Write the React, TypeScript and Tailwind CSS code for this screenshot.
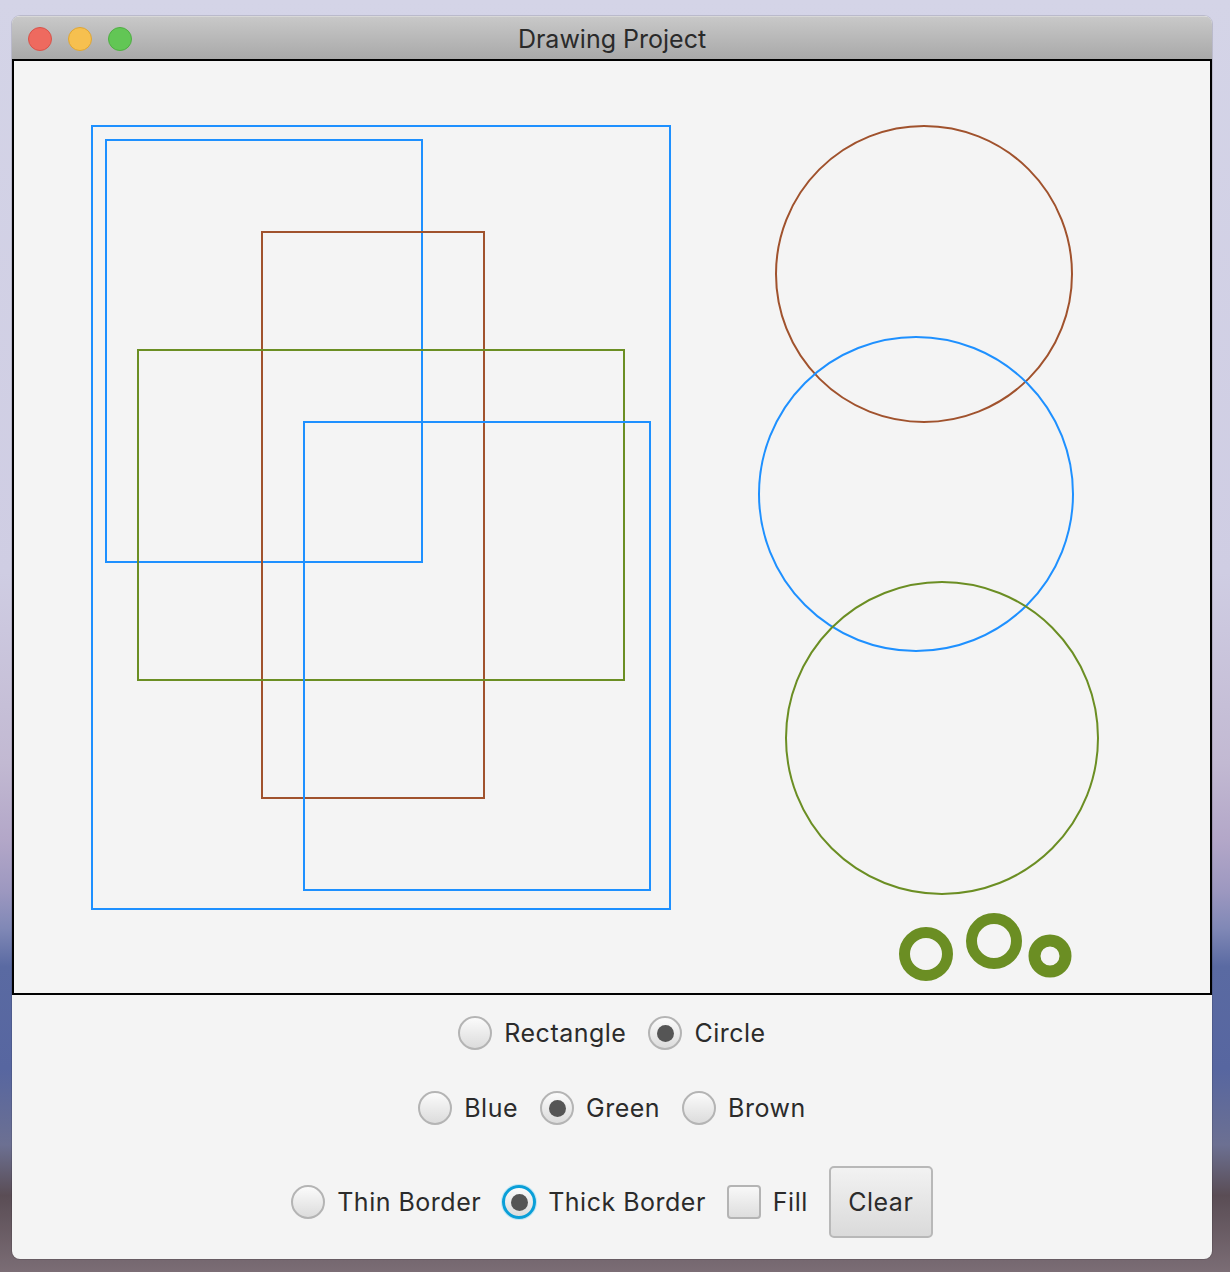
import React from "react";

const BLUE = "#1e90ff";
const GREEN = "#6b8e23";
const BROWN = "#a0522d";

interface Shape {
  kind: "rect" | "circle";
  color: string;
  width: number;
  x: number;
  y: number;
  w: number;
  h: number;
}

// coordinates are in page pixels, the canvas group is shifted back by its origin
const shapes: Shape[] = [
  { kind: "rect", color: BLUE, width: 2, x: 92, y: 126, w: 578, h: 783 },
  { kind: "rect", color: BLUE, width: 2, x: 106, y: 140, w: 316, h: 422 },
  { kind: "rect", color: BROWN, width: 2, x: 262, y: 232, w: 222, h: 566 },
  { kind: "rect", color: GREEN, width: 2, x: 138, y: 350, w: 486, h: 330 },
  { kind: "rect", color: BLUE, width: 2, x: 304, y: 422, w: 346, h: 468 },
  { kind: "circle", color: BROWN, width: 2, x: 924, y: 274, w: 148, h: 0 },
  { kind: "circle", color: BLUE, width: 2, x: 916, y: 494, w: 157, h: 0 },
  { kind: "circle", color: GREEN, width: 2, x: 942, y: 738, w: 156, h: 0 },
  { kind: "circle", color: GREEN, width: 11, x: 926, y: 954, w: 21.5, h: 0 },
  { kind: "circle", color: GREEN, width: 11, x: 994, y: 941, w: 22.5, h: 0 },
  { kind: "circle", color: GREEN, width: 12, x: 1050, y: 956, w: 15.5, h: 0 },
];

const Radio: React.FC<{ label: string; checked?: boolean; focused?: boolean }> = ({
  label,
  checked,
  focused,
}) => (
  <div className="flex items-center gap-3">
    <div
      className={
        focused
          ? "flex h-[34px] w-[34px] items-center justify-center rounded-full border-[3px] border-[#0a9fd8] bg-gradient-to-b from-[#fbfbfb] to-[#dcdcdc] shadow-[0_0_0_1px_#bfe6f5]"
          : "flex h-[34px] w-[34px] items-center justify-center rounded-full border-2 border-[#b4b4b4] bg-gradient-to-b from-[#fbfbfb] to-[#dcdcdc]"
      }
    >
      {checked && <div className="h-[17px] w-[17px] rounded-full bg-[#555555]" />}
    </div>
    <span>{label}</span>
  </div>
);

export default function App() {
  return (
    <div className="h-[1272px] w-[1230px] overflow-hidden bg-[linear-gradient(180deg,#d4d4e7_0%,#cfcde3_45%,#c2b9d2_60%,#b3a7c8_66%,#9d98c0_70%,#8088b6_73%,#5a6aa2_76%,#5766a0_84%,#6c7092_90%,#5a4d55_94%,#7b6d75_100%)] pt-[16px] pl-[12px] font-['Inter','Liberation_Sans',sans-serif] text-[25px] leading-[34px] tracking-[0.5px] text-[#2b2b2b]">
      <div className="flex h-[1243px] w-[1200px] flex-col overflow-hidden rounded-[8px] bg-[#f4f4f4] shadow-[0_0_0_1px_rgba(0,0,0,0.12)]">
        {/* title bar */}
        <div className="relative flex h-[43px] shrink-0 items-center justify-center border-t border-[#d8d8d8] bg-gradient-to-b from-[#c8c8c8] to-[#a9a9a9]">
          <div className="absolute left-[16px] top-[10px] flex gap-[16px]">
            <div className="h-[24px] w-[24px] rounded-full border border-[#d7534a] bg-[#ee6a5f]" />
            <div className="h-[24px] w-[24px] rounded-full border border-[#dea534] bg-[#f6c04f]" />
            <div className="h-[24px] w-[24px] rounded-full border border-[#4fae43] bg-[#62c655]" />
          </div>
          <span className="pt-[2px] tracking-normal text-[#2a2a2a]">Drawing Project</span>
        </div>

        {/* drawing canvas */}
        <div className="h-[936px] shrink-0 border-2 border-black bg-[#f4f4f4]">
          <svg width="100%" height="100%">
            <g transform="translate(-14,-61)" fill="none">
              {shapes.map((s, i) =>
                s.kind === "rect" ? (
                  <rect key={i} x={s.x} y={s.y} width={s.w} height={s.h} stroke={s.color} strokeWidth={s.width} />
                ) : (
                  <circle key={i} cx={s.x} cy={s.y} r={s.w} stroke={s.color} strokeWidth={s.width} />
                )
              )}
            </g>
          </svg>
        </div>

        {/* controls */}
        <div className="flex flex-1 flex-col items-center gap-[41px] pt-[21px]">
          <div className="flex items-center gap-[22px]">
            <Radio label="Rectangle" />
            <Radio label="Circle" checked />
          </div>
          <div className="flex items-center gap-[22px]">
            <Radio label="Blue" />
            <Radio label="Green" checked />
            <Radio label="Brown" />
          </div>
          <div className="flex items-center gap-[21px]">
            <Radio label="Thin Border" />
            <Radio label="Thick Border" checked focused />
            <div className="flex items-center gap-3">
              <div className="h-[34px] w-[34px] rounded-[4px] border-2 border-[#b4b4b4] bg-gradient-to-b from-[#f8f8f8] to-[#dedede]" />
              <span>Fill</span>
            </div>
            <button className="h-[72px] w-[104px] rounded-[5px] border-2 border-[#b8b8b8] bg-gradient-to-b from-[#f2f2f2] to-[#dadada] text-[#2b2b2b]">
              Clear
            </button>
          </div>
        </div>
      </div>
    </div>
  );
}
